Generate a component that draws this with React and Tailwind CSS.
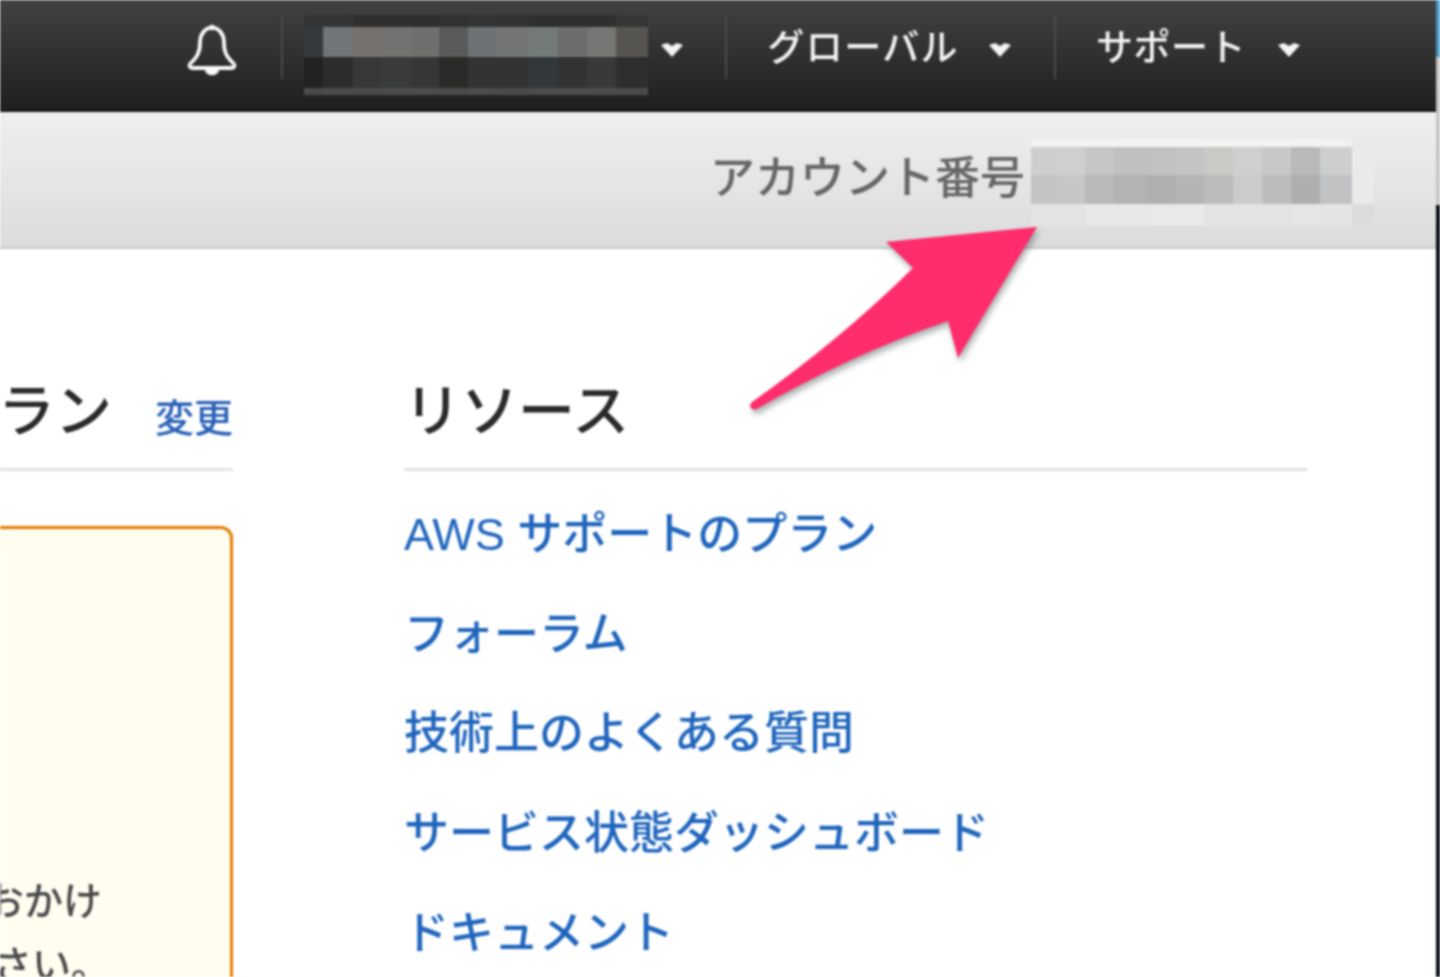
const jp = { fontFamily: '"Liberation Sans", "Noto Sans CJK JP", sans-serif' };

const nameCols = [19, 30, 29, 29, 28, 29, 28, 33, 29, 29, 29, 32];
const nameRows = [
  { h: 12, c: ['#343434', '#343434', '#2e2e2e', '#2e2e2e', '#2e2e2e', '#323232', '#343434', '#333333', '#2f2f2f', '#2f2f2f', '#2f2f2f', '#363636'] },
  { h: 30, c: ['#36393b', '#727577', '#76726f', '#717371', '#6f706e', '#595a59', '#6f7274', '#737573', '#747a7a', '#6c6d6c', '#767775', '#565552'] },
  { h: 31, c: ['#222222', '#2c2c2c', '#383838', '#393c3b', '#363636', '#2a2a28', '#333333', '#333333', '#34373a', '#333333', '#393939', '#2e2e2e'] },
  { h: 7, c: ['#4a4a4a', '#4c4c4c', '#4a4a4a', '#4c4c4c', '#4c4c4c', '#4a4a4a', '#4c4c4c', '#4a4a4a', '#4c4c4c', '#4c4c4c', '#4c4c4c', '#4a4a4a'] },
];

const acctCols = [26, 28, 29, 32, 29, 29, 29, 29, 29, 29, 32, 22];
const acctRows = [
  { h: 8, c: ['#f1f1f1', '#f1f1f1', '#f1f1f1', '#f3f3f3', '#f3f3f3', '#f3f3f3', '#f1f1f1', '#f1f1f1', '#f1f1f1', '#f3f3f3', '#f1f1f1', '#e9e9e9'] },
  { h: 28, c: ['#cecece', '#cdd0cf', '#c6c6c4', '#bfc1c0', '#bfc2c0', '#c3c5c4', '#c9c9c6', '#cfcfcf', '#c8c8c8', '#b9b9b9', '#cdcfce', '#e9eaea'] },
  { h: 29, c: ['#c4c4c4', '#c5c7c6', '#b9b9b7', '#b2b3b2', '#b0b0b0', '#b4b4b4', '#bcbcbc', '#cbcbcb', '#bcbcbc', '#aeaeae', '#c1c2c4', '#e9eaea'] },
  { h: 22, c: ['#e3e3e3', '#e3e3e3', '#e6e8e7', '#e6e8e7', '#e8eaea', '#e8eaea', '#e3e3e3', '#e3e3e3', '#e3e3e3', '#e5e5e5', '#e4e4e4', '#dcdcdc'] },
];

function Mosaic({ cols, rows }) {
  return (
    <div className="flex flex-col">
      {rows.map((row, i) => (
        <div key={i} className="flex" style={{ height: row.h }}>
          {row.c.map((color, j) => (
            <div key={j} style={{ width: cols[j], background: color }} />
          ))}
        </div>
      ))}
    </div>
  );
}

function Caret({ className }) {
  return (
    <svg width="22" height="15" viewBox="0 0 22 15" className={className}>
      <path d="M0 3 L6 1 L11 4 L16 1 L22 3 L11 15 Z" fill="#f4f4f4" />
    </svg>
  );
}

function Divider() {
  return <div className="w-[2px] h-[64px] bg-[#4a4a4a]" />;
}

const links = ['AWS サポートのプラン', 'フォーラム', '技術上のよくある質問', 'サービス状態ダッシュボード', 'ドキュメント'];

export default function App() {
  return (
    <div className="relative w-[1440px] h-[977px] overflow-hidden bg-white blur-[0.8px] flex" style={jp}>
      <div className="w-[1436px] shrink-0">
        <header className="h-[110px] flex items-start justify-end bg-gradient-to-b from-[#424242] to-[#1f1f1f] border-b-[2px] border-[#161616] box-content">
          <svg width="52" height="56" viewBox="0 0 52 56" fill="none" className="mr-[43px] mt-[24px]">
            <path d="M26 3 C17 5 14 11 14 19 C14 30 10 34 4 40 C3 42 4 44 6 44 H46 C48 44 49 42 48 40 C42 34 38 30 38 19 C38 11 35 5 26 3 Z" stroke="#f8f8f8" strokeWidth="3.8" strokeLinejoin="round" />
            <circle cx="26" cy="3.5" r="2.8" fill="#f8f8f8" />
            <path d="M19 46 C20 53 32 53 33 46 Z" fill="#f8f8f8" />
          </svg>
          <div className="mt-[15px]"><Divider /></div>
          <div className="ml-[21px] mr-[13px] mt-[15px]">
            <Mosaic cols={nameCols} rows={nameRows} />
          </div>
          <Caret className="mr-[42px] mt-[42px]" />
          <div className="mt-[15px]"><Divider /></div>
          <span className="ml-[40px] mr-[30px] mt-[27px] text-[37px] leading-[44px] font-medium text-[#f2f2f2] whitespace-nowrap tracking-[1.4px]">グローバル</span>
          <Caret className="mr-[43px] mt-[42px]" />
          <div className="mt-[15px]"><Divider /></div>
          <span className="ml-[40px] mr-[32px] mt-[27px] text-[37px] leading-[44px] font-medium text-[#f2f2f2] whitespace-nowrap tracking-[0.5px]">サポート</span>
          <Caret className="mr-[136px] mt-[42px]" />
        </header>

        <div className="h-[135px] flex items-start justify-end pr-[62px] bg-gradient-to-b from-[#efefef] to-[#dcdcdc] border-b-[2px] border-[#c6c6c6] box-content">
          <div className="flex items-start mt-[27px]">
            <span className="mt-[12px] text-[45px] leading-[56px] font-medium text-[#666666] whitespace-nowrap mr-[6px]">アカウント番号</span>
            <Mosaic cols={acctCols} rows={acctRows} />
          </div>
        </div>

        <main className="flex">
          <section className="w-[233px] shrink-0 overflow-hidden">
            <div className="h-[222px] flex flex-col justify-end">
              <div className="flex items-end justify-end pb-[22px] border-b-[3px] border-[#e2e2e2]">
                <span className="shrink-0 text-[57px] leading-[70px] font-medium text-[#2a2a2a] whitespace-nowrap mr-[43px]">サポートプラン</span>
                <a className="shrink-0 text-[39px] leading-[54px] font-medium text-[#2a60b8] whitespace-nowrap">変更</a>
              </div>
            </div>
            <div className="mt-[55px] h-[500px] ml-[-40px] border-[3px] border-[#e57a00] rounded-[12px] bg-[#fffdf0] flex justify-end pt-[341px] pr-[128px]">
              <div className="shrink-0 text-right text-[39px] leading-[64px] font-medium text-[#4a4a4a] whitespace-nowrap">
                <div>お問い合わせおかけ</div>
                <div className="mr-[-8px]">ください。</div>
              </div>
            </div>
          </section>

          <section className="ml-[171px] w-[903px] shrink-0">
            <div className="h-[222px] flex flex-col justify-end">
              <div className="pb-[22px] border-b-[3px] border-[#e2e2e2]">
                <h2 className="text-[57px] leading-[70px] font-medium text-[#2a2a2a]">リソース</h2>
              </div>
            </div>
            <ul className="mt-[14px]">
              {links.map((t) => (
                <li key={t} className="h-[99.6px] flex items-center text-[45px] leading-none font-medium text-[#1f65bd] whitespace-nowrap">
                  <a>{t}</a>
                </li>
              ))}
            </ul>
          </section>
        </main>
      </div>

      <div className="w-[4px] shrink-0 flex flex-col">
        <div className="h-[57px] bg-[#4a9ac6]" />
        <div className="h-[148px] bg-[#c6c6c6]" />
        <div className="flex-1 bg-[#050a12]" />
      </div>

      <svg width="320" height="200" viewBox="730 200 320 200" className="absolute left-[730px] top-[200px] h-[200px] overflow-visible drop-shadow-[2px_4px_3px_rgba(60,70,70,0.45)]">
        <path d="M1037 227 L886 242 L913 268 Q840 340 752 402 Q747 408 755 410 Q850 355 948 321 L958 358 Z" fill="#ff2d6c" />
      </svg>
    </div>
  );
}
